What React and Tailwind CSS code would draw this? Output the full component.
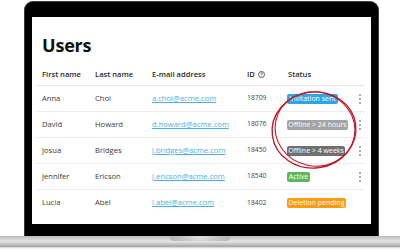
import React from "react";

const rows = [
  { first: "Anna", last: "Choi", email: "a.choi@acme.com", id: "18709", status: "Invitation sent", cls: "bg-[#2ba6e0] w-[51px]", kebab: true },
  { first: "David", last: "Howard", email: "d.howard@acme.com", id: "18076", status: "Offline > 24 hours", cls: "bg-[#a3a3a3] w-[61px]", kebab: true },
  { first: "Josua", last: "Bridges", email: "j.bridges@acme.com", id: "18450", status: "Offline > 4 weeks", cls: "bg-[#6f6f6f] w-[58px]", kebab: true },
  { first: "Jennifer", last: "Ericson", email: "j.ericson@acme.com", id: "18540", status: "Active", cls: "bg-[#5cb85c] w-[23px]", kebab: true },
  { first: "Lucia", last: "Abel", email: "l.abel@acme.com", id: "18402", status: "Deletion pending", cls: "bg-[#ff9a0a] w-[59px]", kebab: false },
];

const grid = "grid grid-cols-[53px_57px_95px_41px_73px_10px]";

function Kebab() {
  return (
    <div className="flex flex-col items-center gap-[2px]">
      <span className="w-[2px] h-[2px] rounded-full bg-[#8f8f8f]" />
      <span className="w-[2px] h-[2px] rounded-full bg-[#8f8f8f]" />
      <span className="w-[2px] h-[2px] rounded-full bg-[#8f8f8f]" />
    </div>
  );
}

export default function App() {
  return (
    <div className="relative w-[400px] h-[250px] bg-white overflow-hidden" style={{ fontFamily: '"Open Sans", "Noto Sans", sans-serif' }}>
      <div className="flex flex-col">
        {/* lid */}
        <div className="ml-[24px] mt-[1px] w-[355px] h-[235px] bg-black rounded-t-[9px] border border-b-0 border-[#3a3a3a] pl-[7px] pr-[7px] pt-[15px]">
          <div className="w-[339px] h-[207px] bg-white pl-[4px] pt-[18px]">
            <div className="pl-[6px] text-[18px] leading-[20px] font-bold text-[#111] tracking-[-0.2px]">Users</div>
            <div className="mt-[9px] w-[329px]">
              <div className={`${grid} h-[22px] items-center border-b border-[#e6e6e6] text-[7.6px] font-semibold text-[#2a2a2a]`}>
                <div className="pl-[6px]">First name</div>
                <div className="pl-[6px]">Last name</div>
                <div className="pl-[6px]">E-mail address</div>
                <div className="pl-[6px] flex items-center gap-[2px]">
                  ID
                  <svg width="7" height="7" viewBox="0 0 12 12" className="ml-[1px]">
                    <circle cx="6" cy="6" r="5.2" fill="none" stroke="#333" strokeWidth="1.3" />
                    <path d="M4.4 4.6 C4.4 3.5 5.1 3 6 3 C6.9 3 7.6 3.6 7.6 4.4 C7.6 5.4 6.2 5.5 6.2 6.8" fill="none" stroke="#333" strokeWidth="1.2" />
                    <circle cx="6.2" cy="8.6" r="0.7" fill="#333" />
                  </svg>
                </div>
                <div className="pl-[6px]">Status</div>
                <div />
              </div>
              {rows.map((r, i) => (
                <div
                  key={r.id}
                  className={`${grid} h-[26px] items-center text-[7.6px] text-[#3a3a3a] ${i < rows.length - 1 ? "border-b border-[#ececec]" : ""}`}
                >
                  <div className="pl-[6px]">{r.first}</div>
                  <div className="pl-[6px]">{r.last}</div>
                  <div className="pl-[6px] text-[#4cadea] underline underline-offset-[1px]">{r.email}</div>
                  <div className="pl-[6px] text-[6.8px] text-[#444]">{r.id}</div>
                  <div className="pl-[5px]">
                    <div className={`${r.cls} h-[10px] rounded-[2px] text-white text-[7px] leading-[10px] text-center whitespace-nowrap`}>
                      {r.status}
                    </div>
                  </div>
                  <div className="flex justify-center">{r.kebab ? <Kebab /> : null}</div>
                </div>
              ))}
            </div>
          </div>
        </div>
        {/* base */}
        <div className="relative w-[400px] h-[11px] bg-linear-to-b from-[#bdbdbd] via-[#e4e4e4] to-[#a4a4a4]">
          <div className="absolute left-[170px] top-0 w-[60px] h-[5px] rounded-b-[4px] bg-linear-to-r from-[#b4b4b4] via-[#dcdcdc] to-[#b4b4b4]" />
        </div>
        <div className="w-[400px] h-[2px] bg-linear-to-b from-[#cfcfcf] to-white" />
      </div>
      {/* red hand-drawn circle */}
      <svg className="absolute left-0 top-0 pointer-events-none" width="400" height="250" viewBox="0 0 400 250">
        <ellipse cx="314" cy="130" rx="42" ry="38" fill="none" stroke="#bf1529" strokeWidth="1.3" transform="rotate(-8 314 130)" />
        <ellipse cx="315" cy="129" rx="40" ry="37" fill="none" stroke="#bf1529" strokeWidth="1.1" transform="rotate(12 315 129)" />
      </svg>
    </div>
  );
}
